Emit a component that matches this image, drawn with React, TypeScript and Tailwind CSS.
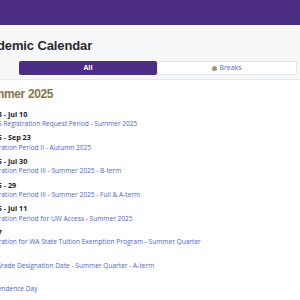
const events = [
  { date: 'Jun 23 - Jul 10', title: 'UW ISS Registration Request Period - Summer 2025' },
  { date: 'Jun 25 - Sep 23', title: 'Registration Period II - Autumn 2025' },
  { date: 'Jun 25 - Jul 30', title: 'Registration Period III - Summer 2025 - B-term' },
  { date: 'Jun 25 - 29', title: 'Registration Period III - Summer 2025 - Full & A-term' },
  { date: 'Jun 25 - Jul 11', title: 'Registration Period for UW Access - Summer 2025' },
  { date: 'Jun 27', title: 'Registration for WA State Tuition Exemption Program - Summer Quarter' },
  { date: 'Jul 3', title: 'S/NS Grade Designation Date - Summer Quarter - A-term' },
  { date: 'Jul 4', title: 'Independence Day' },
];

const heading = { fontFamily: '"Liberation Sans", Arial, sans-serif' };

export default function App() {
  return (
    <div className="w-[300px] h-[300px] overflow-hidden bg-white" style={{ fontFamily: '"Open Sans", sans-serif' }}>
      <div className="h-[25px] bg-[#4b2e83]" />

      <div className="bg-[#f6f7f9] border-b border-[#e6e8ec] pt-[11px] pb-[4px]">
        <h1
          className="ml-[-26.5px] h-[20px] leading-[20px] text-[13px] font-bold tracking-[-0.12px] text-[#2a2a30] whitespace-nowrap"
          style={heading}
        >
          Academic Calendar
        </h1>
        <div className="mt-[5px] ml-[19px] mr-[3px] flex h-[14px]">
          <button className="flex-1 rounded-[2px] bg-[#4b2e83] text-[7px] font-bold leading-[14px] text-white">
            All
          </button>
          <button className="flex flex-1 items-center justify-center gap-[2px] rounded-[2px] border border-[#e3e6ec] bg-white text-[7px] leading-[12px] text-[#5566c8]">
            <span className="inline-block h-[5px] w-[5px] rounded-full bg-[#a8956a]" />
            Breaks
          </button>
        </div>
      </div>

      <div className="pt-[6px]">
        <h2
          className="ml-[-21px] h-[16px] leading-[16px] text-[12px] font-bold tracking-[-0.35px] text-[#85754d] whitespace-nowrap"
          style={heading}
        >
          Summer 2025
        </h2>
        <ul className="mt-[6.75px] ml-[-20px]">
          {events.map((e) => (
            <li key={e.title} className="flex h-[23.6px] flex-col whitespace-nowrap">
              <span className="text-[7.2px] font-bold leading-[10.5px] text-[#1a1a1a]">{e.date}</span>
              <a href="#" className="text-[6.6px] leading-[10.5px] text-[#4f63c8]">
                {e.title}
              </a>
            </li>
          ))}
        </ul>
      </div>
    </div>
  );
}
